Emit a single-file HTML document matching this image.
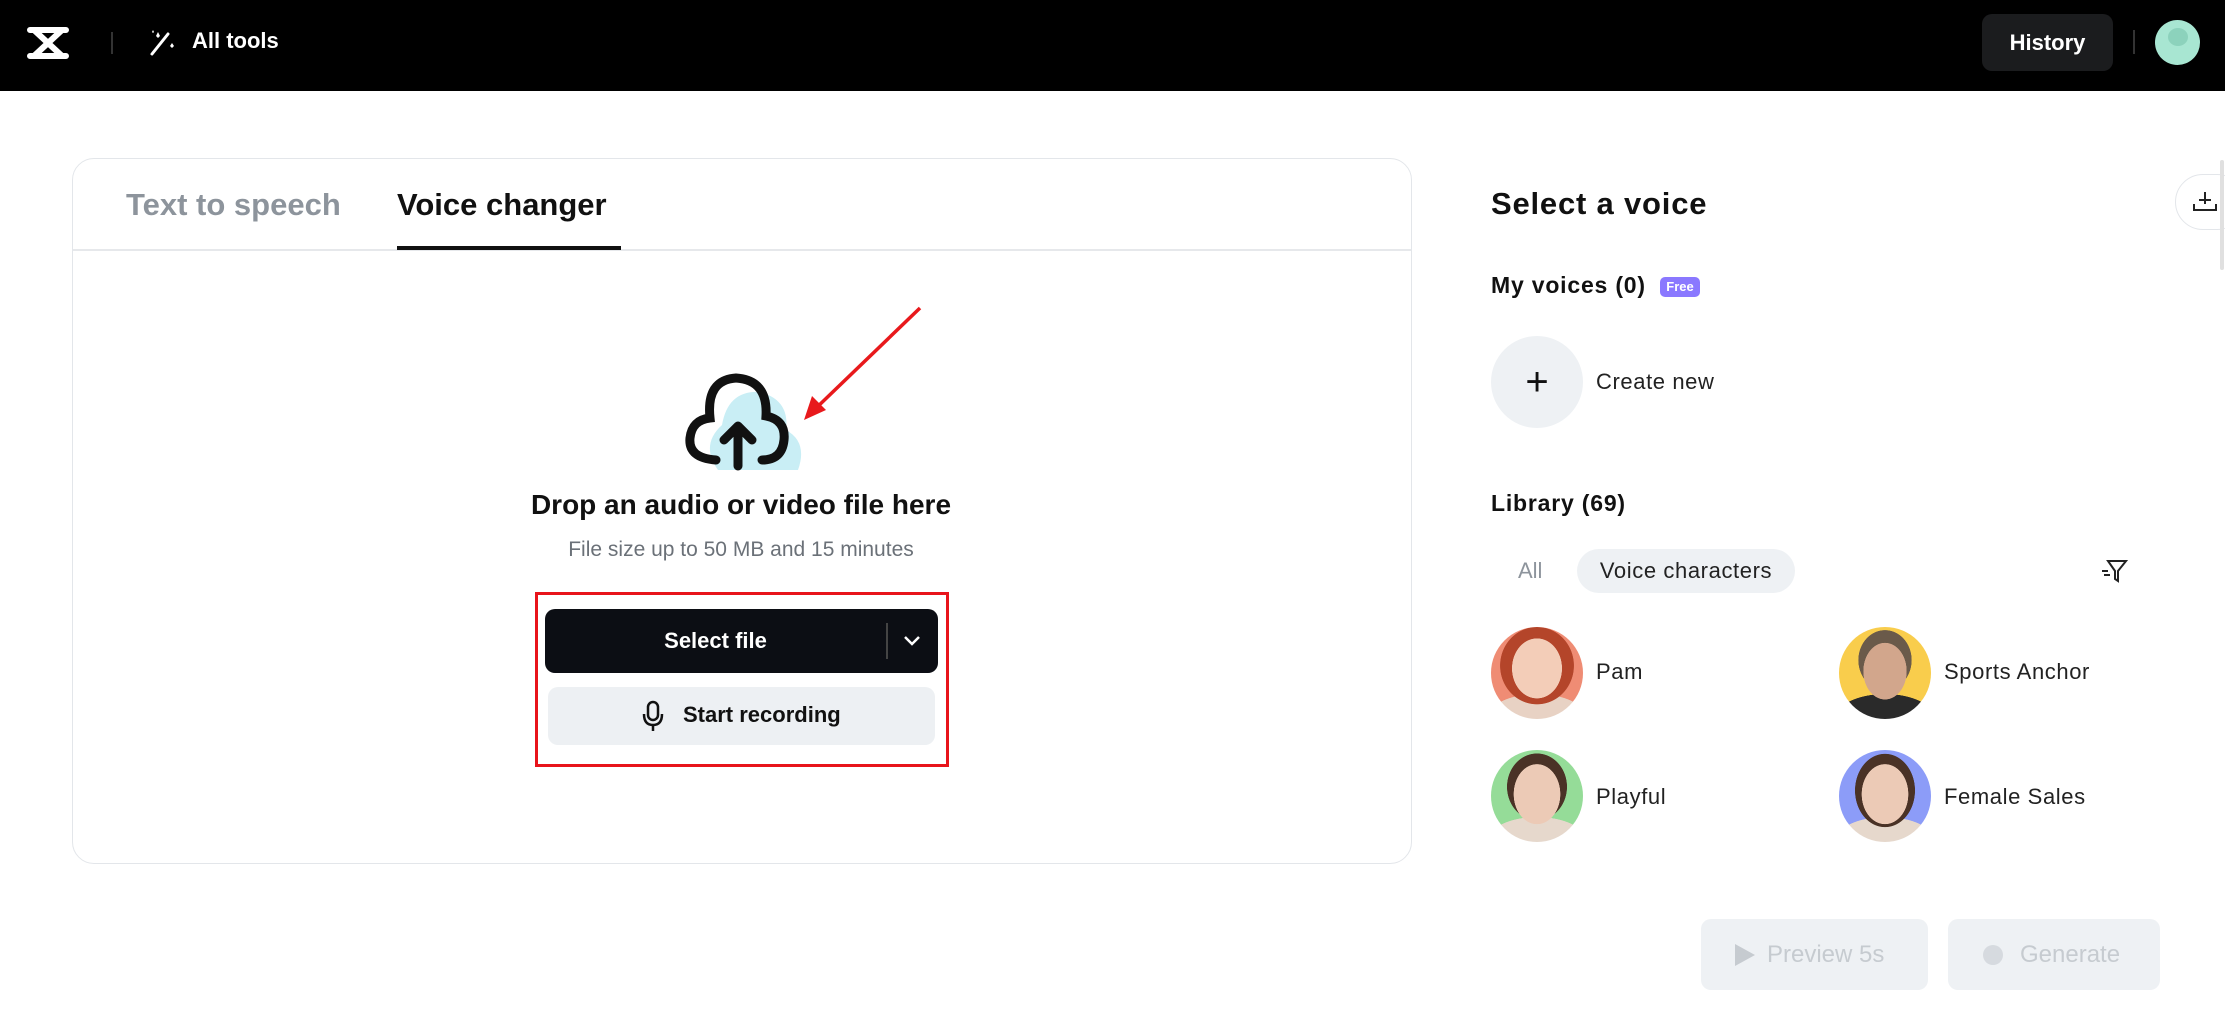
<!DOCTYPE html>
<html><head><meta charset="utf-8"><style>
*{margin:0;padding:0;box-sizing:border-box}
body{width:2225px;height:1034px;background:#fff;font-family:"Liberation Sans",sans-serif;position:relative;overflow:hidden;color:#111}
.a{position:absolute}
.hdr{left:0;top:0;width:2225px;height:91px;background:#000}
.card{left:72px;top:158px;width:1340px;height:706px;border:1.5px solid #e3e6ea;border-radius:22px}
.av{width:92px;height:92px;border-radius:50%;overflow:hidden}
.nm{font-size:22px;color:#222;letter-spacing:0.6px}
.r{letter-spacing:0.8px}
</style></head><body>
<div class="a hdr"></div>
<svg class="a" style="left:26px;top:24px" width="44" height="38" viewBox="0 0 44 38"><path d="M4 6 L40 6 M4 32 L40 32 M8 6 L36 32 M36 6 L8 32" stroke="#fff" stroke-width="6" fill="none" stroke-linecap="round"/></svg>
<div class="a" style="left:111px;top:32px;width:2px;height:22px;background:#333"></div>
<svg class="a" style="left:148px;top:28px" width="28" height="30" viewBox="0 0 28 30"><path d="M4 26 L20 6" stroke="#fff" stroke-width="3" stroke-linecap="round"/><path d="M8 8 l2-4 2 4-2 2z M22 18 l2-3 2 3-2 2z M4 4 l1-2 1 2-1 1z" fill="#fff"/></svg>
<div class="a" style="left:192px;top:28px;font-size:22px;color:#fff;font-weight:bold">All tools</div>
<div class="a" style="left:1982px;top:14px;width:131px;height:57px;background:#1b1c1e;border-radius:10px;color:#fff;font-size:22px;font-weight:bold;text-align:center;line-height:57px">History</div>
<div class="a" style="left:2133px;top:30px;width:2px;height:24px;background:#333"></div>
<div class="a" style="left:2155px;top:20px;width:45px;height:45px;border-radius:50%;background:#a8e6d2"></div>
<div class="a" style="left:2168px;top:28px;width:20px;height:18px;border-radius:50%;background:#8cd2bc"></div>

<div class="a card"></div>
<div class="a" style="left:126px;top:187px;font-size:31px;font-weight:bold;color:#8d949c">Text to speech</div>
<div class="a" style="left:397px;top:187px;font-size:31px;font-weight:bold;color:#111">Voice changer</div>
<div class="a" style="left:73px;top:249px;width:1338px;height:1.5px;background:#e6e8eb"></div>
<div class="a" style="left:397px;top:246px;width:224px;height:4px;background:#111"></div>

<svg class="a" style="left:678px;top:370px" width="130" height="110" viewBox="0 0 130 110">
<path d="M40 100 Q22 75 44 55 Q50 20 82 22 Q112 30 108 60 Q130 72 120 100 Z" fill="#c9eef5"/>
<path d="M38 90 Q10 88 12 68 Q14 50 32 48 Q28 10 58 8 Q90 10 88 46 Q108 50 106 70 Q104 90 84 90" stroke="#111" stroke-width="9" fill="none" stroke-linecap="round"/>
<path d="M60 96 L60 58 M46 70 L60 56 L74 70" stroke="#111" stroke-width="9" fill="none" stroke-linecap="round" stroke-linejoin="round"/>
</svg>
<svg class="a" style="left:790px;top:300px" width="140" height="130"><path d="M130 8 L22 112" stroke="#e8191c" stroke-width="3.5"/><path d="M14 120 L22 96 L36 110 Z" fill="#e8191c"/></svg>

<div class="a" style="left:441px;top:489px;width:600px;text-align:center;font-size:28px;font-weight:bold">Drop an audio or video file here</div>
<div class="a" style="left:441px;top:538px;width:600px;text-align:center;font-size:21px;color:#6b7178">File size up to 50 MB and 15 minutes</div>
<div class="a" style="left:535px;top:592px;width:414px;height:175px;border:3px solid #e8141b"></div>
<div class="a" style="left:545px;top:609px;width:393px;height:64px;background:#0c0e14;border-radius:10px"></div>
<div class="a" style="left:545px;top:609px;width:341px;height:64px;line-height:64px;text-align:center;color:#fff;font-size:22px;font-weight:bold">Select file</div>
<div class="a" style="left:886px;top:623px;width:1.5px;height:36px;background:#444"></div>
<svg class="a" style="left:902px;top:634px" width="20" height="14"><path d="M3 3 L10 10 L17 3" stroke="#fff" stroke-width="2.5" fill="none"/></svg>
<div class="a" style="left:548px;top:687px;width:387px;height:58px;background:#edf0f3;border-radius:10px"></div>
<svg class="a" style="left:642px;top:700px" width="22" height="32" viewBox="0 0 22 32"><rect x="6" y="2" width="10" height="18" rx="5" stroke="#111" stroke-width="2.5" fill="none"/><path d="M2 14 Q2 25 11 25 Q20 25 20 14 M11 25 V31" stroke="#111" stroke-width="2.5" fill="none"/></svg>
<div class="a" style="left:683px;top:702px;font-size:22px;font-weight:bold">Start recording</div>

<div class="a r" style="left:1491px;top:186px;font-size:31px;font-weight:bold">Select a voice</div>
<div class="a r" style="left:1491px;top:272px;font-size:23px;font-weight:bold">My voices (0)</div>
<div class="a" style="left:1660px;top:277px;width:40px;height:20px;background:#8a78ff;border-radius:5px;color:#fff;font-size:13px;font-weight:bold;text-align:center;line-height:20px">Free</div>
<div class="a" style="left:1491px;top:336px;width:92px;height:92px;border-radius:50%;background:#eef1f4"></div>
<div class="a" style="left:1518px;top:363px;width:38px;height:38px;font-size:40px;line-height:38px;text-align:center;color:#111">+</div>
<div class="a nm" style="left:1596px;top:369px">Create new</div>
<div class="a r" style="left:1491px;top:490px;font-size:23px;font-weight:bold">Library (69)</div>
<div class="a" style="left:1518px;top:558px;font-size:22px;color:#8d949c">All</div>
<div class="a" style="left:1577px;top:549px;width:218px;height:44px;border-radius:22px;background:#eef1f4;font-size:22px;text-align:center;line-height:44px;color:#222;letter-spacing:0.6px">Voice characters</div>
<svg class="a" style="left:2100px;top:557px" width="28" height="28" viewBox="0 0 28 28"><path d="M8 4 H26 L18 14 V24 L15 22 V14 Z M2 14 H8 M4 18 H10" stroke="#222" stroke-width="2" fill="none"/></svg>

<div class="a av" style="left:1491px;top:627px;background:radial-gradient(ellipse 30% 36% at 50% 45%,#f3cdb8 0 90%,transparent 91%),radial-gradient(ellipse 42% 44% at 50% 42%,#b4452a 0 95%,transparent 96%),radial-gradient(ellipse 60% 30% at 50% 100%,#e8d2c4 0 90%,transparent 91%),#ef8c74"></div>
<div class="a nm" style="left:1596px;top:659px">Pam</div>
<div class="a av" style="left:1839px;top:627px;background:radial-gradient(ellipse 26% 34% at 50% 48%,#d2a68c 0 90%,transparent 91%),radial-gradient(ellipse 32% 36% at 50% 36%,#6a5a4a 0 90%,transparent 91%),radial-gradient(ellipse 60% 30% at 50% 100%,#2a2a2a 0 90%,transparent 91%),#f9cd4c"></div>
<div class="a nm" style="left:1944px;top:659px">Sports Anchor</div>
<div class="a av" style="left:1491px;top:750px;background:radial-gradient(ellipse 28% 36% at 50% 48%,#eccab6 0 90%,transparent 91%),radial-gradient(ellipse 36% 40% at 50% 40%,#4a3226 0 90%,transparent 91%),radial-gradient(ellipse 60% 30% at 50% 100%,#e6d8cc 0 90%,transparent 91%),#95dc98"></div>
<div class="a nm" style="left:1596px;top:784px">Playful</div>
<div class="a av" style="left:1839px;top:750px;background:radial-gradient(ellipse 28% 36% at 50% 48%,#eccab6 0 90%,transparent 91%),radial-gradient(ellipse 36% 44% at 50% 44%,#4a3226 0 90%,transparent 91%),radial-gradient(ellipse 60% 30% at 50% 100%,#e6d8cc 0 90%,transparent 91%),#8c9cf8"></div>
<div class="a nm" style="left:1944px;top:784px">Female Sales</div>

<div class="a" style="left:1701px;top:919px;width:227px;height:71px;background:#eef1f4;border-radius:10px;color:#c6cbd0;font-size:24px;line-height:71px;padding-left:66px">Preview 5s</div>
<svg class="a" style="left:1733px;top:942px" width="24" height="26"><path d="M2 2 L22 13 L2 24 Z" fill="#c6cbd0"/></svg>
<div class="a" style="left:1948px;top:919px;width:212px;height:71px;background:#eef1f4;border-radius:10px;color:#c6cbd0;font-size:24px;line-height:71px;padding-left:72px">Generate</div>
<div class="a" style="left:1983px;top:945px;width:20px;height:20px;border-radius:50%;background:#d6dadf"></div>
<div class="a" style="left:2175px;top:174px;width:70px;height:56px;border-radius:28px;border:1.5px solid #e3e6ea;background:#fff"></div>
<svg class="a" style="left:2192px;top:188px" width="26" height="26" viewBox="0 0 26 26"><path d="M2 16 V22 H24 V16 M13 4 V16 M7 12 H19" stroke="#222" stroke-width="2" fill="none"/></svg>
<div class="a" style="left:2220px;top:160px;width:4px;height:110px;background:#e0e0e0;border-radius:2px"></div>
</body></html>
